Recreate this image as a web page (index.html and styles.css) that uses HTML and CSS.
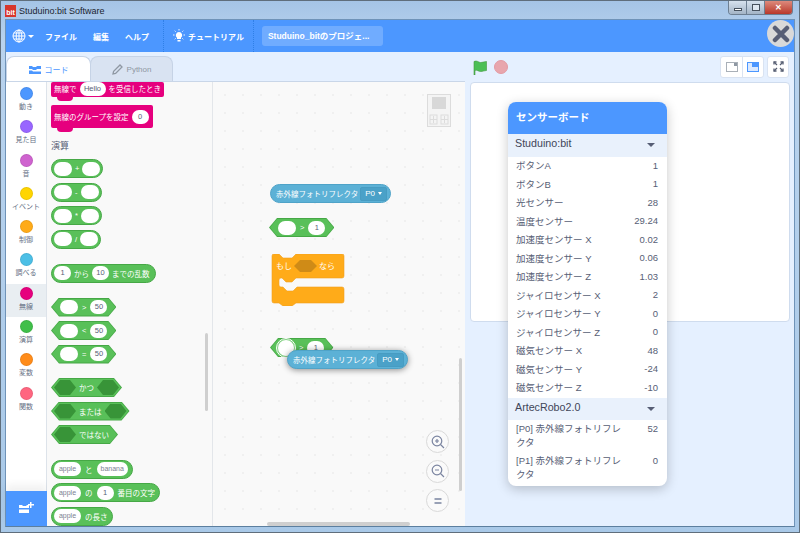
FILE: index.html
```html
<!DOCTYPE html>
<html lang="ja">
<head>
    <meta charset="UTF-8">
    <title>Studuino:bit Software</title>
    <link rel="stylesheet" href="styles.css">
</head>
<body>
<div class="window">
    <div class="titlebar">
        <span class="app-icon">bit</span>
        <span class="app-title">Studuino:bit Software</span>
        <div class="win-buttons">
            <span class="win-btn"><i class="win-min"></i></span>
            <span class="win-btn"><i class="win-max"></i></span>
            <span class="win-btn win-close">&#x2715;</span>
        </div>
    </div>

    <div class="app">
        <div class="menubar">
            <svg class="globe" width="14" height="14" viewBox="0 0 14 14" fill="none" stroke="#fff" stroke-width="1">
                <circle cx="7" cy="7" r="6"/>
                <ellipse cx="7" cy="7" rx="2.8" ry="6"/>
                <path d="M1 7h12M1.8 4h10.4M1.8 10h10.4M7 1v12"/>
            </svg>
            <span class="caret"></span>
            <span class="menu-item first">ファイル</span>
            <span class="menu-item">編集</span>
            <span class="menu-item">ヘルプ</span>
            <span class="menu-sep"></span>
            <svg class="bulb" width="14" height="14" viewBox="0 0 14 14" fill="#fff" stroke="#fff">
                <path d="M7 3a3.2 3.2 0 0 0-2 5.700V10h4V8.700A3.200 3.200 0 0 0 7 3z" stroke="none"/>
                <path d="M5.500 11h3v1.500h-3z" stroke="none"/>
                <path d="M7 0v1.500M1 6h1.500M11.500 6H13M2.700 1.700l1 1M11.300 1.700l-1 1M2.700 10.300l1-1M11.300 10.300l-1-1" stroke-width="0.9"/>
            </svg>
            <span class="menu-item tutorial">チュートリアル</span>
            <span class="menu-sep wide"></span>
            <span class="project-name">Studuino_bitのプロジェ...</span>
        </div>

        <div class="main">
            <div class="editor">
                <div class="tabs">
                    <div class="tab active">
                        <svg width="12" height="9" viewBox="0 0 12 9" fill="#4c97ff">
                            <path d="M0 1h3l1 1h3l1-1h4v3H8L7 5H4L3 4H0zM0 5.500h3l1 1h8V9H0z"/>
                        </svg>
                        コード
                    </div>
                    <div class="tab">
                        <svg width="11" height="11" viewBox="0 0 11 11" fill="none" stroke="#8f98a3" stroke-width="1.300">
                            <path d="M1 10l.6-2.600L8 1l2 2-6.400 6.400z"/>
                        </svg>
                        Python
                    </div>
                </div>
                <div class="editor-body">
                    <div class="categories">
                        <div class="cat"><span class="dot motion"></span>動き</div>
                        <div class="cat"><span class="dot looks"></span>見た目</div>
                        <div class="cat"><span class="dot sound"></span>音</div>
                        <div class="cat"><span class="dot event"></span>イベント</div>
                        <div class="cat"><span class="dot control"></span>制御</div>
                        <div class="cat"><span class="dot sensing"></span>調べる</div>
                        <div class="cat selected"><span class="dot radio"></span>無線</div>
                        <div class="cat"><span class="dot operator"></span>演算</div>
                        <div class="cat"><span class="dot variable"></span>変数</div>
                        <div class="cat"><span class="dot func"></span>関数</div>
                        <div class="ext-button">
                            <svg width="15" height="13" viewBox="0 0 15 13" fill="#fff">
                                <path d="M0 3h3l1 1h3l1-1h2v3H0zM0 7.500h10V11H0z"/>
                                <path d="M11 0h1.500v2H15v1.500h-2.500V6H11V3.500H9V2h2z"/>
                            </svg>
                        </div>
                    </div>

                    <div class="palette">
                        <div class="pink-block cut-top">無線で <span class="field wide">Hello</span> を受信したとき</div>
                        <div class="pink-block second">無線のグループを設定 <span class="field">0</span></div>
                        <div class="pal-title">演算</div>

                        <div class="pal-group ops">
                            <div class="pill"><span class="field blank"></span>+<span class="field blank"></span></div>
                            <div class="pill"><span class="field blank"></span>-<span class="field blank"></span></div>
                            <div class="pill"><span class="field blank"></span>*<span class="field blank"></span></div>
                            <div class="pill"><span class="field blank"></span>/<span class="field blank"></span></div>
                        </div>

                        <div class="pill random"><span class="field">1</span>から<span class="field">10</span>までの乱数</div>

                        <div class="pal-group compare">
                            <div class="hex"><span class="field blank"></span>&gt;<span class="field">50</span></div>
                            <div class="hex"><span class="field blank"></span>&lt;<span class="field">50</span></div>
                            <div class="hex"><span class="field blank"></span>=<span class="field">50</span></div>
                        </div>

                        <div class="pal-group logic">
                            <div class="hex"><span class="slot"></span>かつ<span class="slot"></span></div>
                            <div class="hex"><span class="slot"></span>または<span class="slot"></span></div>
                            <div class="hex"><span class="slot"></span>ではない</div>
                        </div>

                        <div class="pal-group strings">
                            <div class="pill"><span class="field text">apple</span>と<span class="field text">banana</span></div>
                            <div class="pill"><span class="field text">apple</span>の<span class="field">1</span>番目の文字</div>
                            <div class="pill"><span class="field text">apple</span>の長さ</div>
                        </div>
                        <div class="scroll-v pal-scroll"></div>
                    </div>

                    <div class="workspace">
                        <svg class="minimap" width="24" height="33" viewBox="0 0 24 33" fill="none" stroke="#dcdcdc">
                            <rect x="0.500" y="0.500" width="23" height="32" fill="#f4f4f4"/>
                            <rect x="5" y="3" width="14" height="12" fill="#d8d8d8" stroke="none"/>
                            <rect x="3" y="21" width="7" height="9"/>
                            <rect x="14" y="21" width="7" height="9"/>
                            <path d="M6.500 22v7M3 25.500h7M17.500 22v7M14 25.500h7"/>
                        </svg>

                        <div class="pill sense on-sheet b1">赤外線フォトリフレクタ<span class="dropdown">P0<i></i></span></div>
                        <div class="hex on-sheet b2"><span class="field blank"></span>&gt;<span class="field">1</span></div>

                        <svg class="on-sheet b3" width="74" height="52" viewBox="0 0 74 52">
                            <path d="M3 0h5l4 4h9l4-4h46a2 2 0 0 1 2 2v20a2 2 0 0 1-2 2H25l-4 4h-6l-4-4h-1a2 2 0 0 0-2 2v5a2 2 0 0 0 2 2h2l4 4h6l4-4h45a2 2 0 0 1 2 2v12a2 2 0 0 1-2 2H25l-4 3h-9l-4-3H3a2 2 0 0 1-2-2V2a2 2 0 0 1 2-2z" fill="#ffab19" stroke="#f0a020" stroke-width="0.600"/>
                            <path d="M23 12l6-6h11l6 6-6 6H29z" fill="#cf8b17"/>
                            <text x="5" y="15" class="if-text">もし</text>
                            <text x="48" y="15" class="if-text">なら</text>
                        </svg>

                        <div class="hex on-sheet b4"><span class="field blank ring"></span>&gt;<span class="field">1</span></div>
                        <div class="pill sense on-sheet b5">赤外線フォトリフレクタ<span class="dropdown">P0<i></i></span></div>

                        <div class="zoom-buttons">
                            <span class="zoom-btn">
                                <svg width="14" height="14" viewBox="0 0 14 14" fill="none" stroke="#7a84a0" stroke-width="1.200">
                                    <circle cx="6" cy="6" r="4.800"/><path d="M9.500 9.500L13 13M4 6h4M6 4v4"/>
                                </svg>
                            </span>
                            <span class="zoom-btn">
                                <svg width="14" height="14" viewBox="0 0 14 14" fill="none" stroke="#7a84a0" stroke-width="1.200">
                                    <circle cx="6" cy="6" r="4.800"/><path d="M9.500 9.500L13 13M4 6h4"/>
                                </svg>
                            </span>
                            <span class="zoom-btn">
                                <svg width="14" height="14" viewBox="0 0 14 14" fill="none" stroke="#7a84a0" stroke-width="1.600">
                                    <path d="M3.500 5h7M3.500 9h7"/>
                                </svg>
                            </span>
                        </div>
                        <div class="scroll-v work-scroll"></div>
                        <div class="scroll-h"></div>
                    </div>
                </div>
            </div>

            <div class="stage-side">
                <div class="stage-header">
                    <svg width="15" height="15" viewBox="0 0 15 15">
                        <path d="M1 1.500c3-1.500 4.500 1 6.500 1s3.500-.8 6-1v9c-2.500.3-4 1-6 1s-3.500-2-5.500-1V15H1z" fill="#4cbf56" stroke="#45993d" stroke-width="0.600"/>
                    </svg>
                    <span class="stop"></span>
                    <div class="stage-tools">
                        <span class="tool-group">
                            <span class="tool">
                                <svg width="12" height="10" viewBox="0 0 12 10">
                                    <rect x="0.500" y="0.500" width="11" height="9" fill="#fff" stroke="#a9b0b8"/>
                                    <rect x="8" y="1" width="3" height="3" fill="#8f98a3"/>
                                </svg>
                            </span>
                            <span class="tool">
                                <svg width="12" height="10" viewBox="0 0 12 10">
                                    <rect x="0.500" y="0.500" width="11" height="9" fill="#dbe9ff" stroke="#4c97ff"/>
                                    <rect x="5" y="1" width="6" height="4" fill="#4c97ff"/>
                                </svg>
                            </span>
                        </span>
                        <span class="tool single">
                            <svg width="11" height="11" viewBox="0 0 11 11" fill="none" stroke="#565e72" stroke-width="1.300">
                                <path d="M1 1l3 3M10 1L7 4M1 10l3-3M10 10L7 7"/>
                                <path d="M1 3.500V1h2.500M7.500 1H10v2.500M1 7.500V10h2.500M10 7.500V10H7.500"/>
                            </svg>
                        </span>
                    </div>
                </div>
                <div class="stage"></div>
            </div>
        </div>

        <div class="close-app">
            <svg width="18" height="18" viewBox="0 0 18 18" stroke="#575e75" stroke-width="4.500" stroke-linecap="round">
                <path d="M3 3l12 12M15 3L3 15"/>
            </svg>
        </div>

        <div class="sensor-board">
            <div class="sb-header">センサーボード</div>
            <div class="sb-section">Studuino:bit<i></i></div>
            <div class="sb-list">
                <div class="sb-row"><span>ボタンA</span><span>1</span></div>
                <div class="sb-row"><span>ボタンB</span><span>1</span></div>
                <div class="sb-row"><span>光センサー</span><span>28</span></div>
                <div class="sb-row"><span>温度センサー</span><span>29.24</span></div>
                <div class="sb-row"><span>加速度センサー X</span><span>0.02</span></div>
                <div class="sb-row"><span>加速度センサー Y</span><span>0.06</span></div>
                <div class="sb-row"><span>加速度センサー Z</span><span>1.03</span></div>
                <div class="sb-row"><span>ジャイロセンサー X</span><span>2</span></div>
                <div class="sb-row"><span>ジャイロセンサー Y</span><span>0</span></div>
                <div class="sb-row"><span>ジャイロセンサー Z</span><span>0</span></div>
                <div class="sb-row"><span>磁気センサー X</span><span>48</span></div>
                <div class="sb-row"><span>磁気センサー Y</span><span>-24</span></div>
                <div class="sb-row"><span>磁気センサー Z</span><span>-10</span></div>
            </div>
            <div class="sb-section second-section">ArtecRobo2.0<i></i></div>
            <div class="sb-list last">
                <div class="sb-row tall"><span>[P0] 赤外線フォトリフレクタ</span><span>52</span></div>
                <div class="sb-row tall"><span>[P1] 赤外線フォトリフレクタ</span><span>0</span></div>
            </div>
        </div>
    </div>
</div>
</body>
</html>
```

FILE: styles.css
```css
* {
    box-sizing: border-box;
}
body {
    margin: 0;
    width: 800px;
    height: 533px;
    overflow: hidden;
    font-family: "Liberation Sans", "Noto Sans CJK JP", sans-serif;
}
.window {
    height: 533px;
    padding: 0 4px 5px;
    background: linear-gradient(#a5c4e6, #b9d3ee 40px, #a9c9e8);
    border: 1px solid #5f6e7c;
    display: flex;
    flex-direction: column;
}
.titlebar {
    height: 18px;
    display: flex;
    align-items: center;
    margin: 0 -1px;
    padding-left: 1px;
    flex-shrink: 0;
}
.app-icon {
    width: 11px;
    height: 12px;
    background: #d7372c;
    color: #fff;
    font-size: 7px;
    font-weight: bold;
    line-height: 15px;
    text-align: center;
    margin: 1px 3px 0 0;
}
.app-title {
    font-size: 9px;
    color: #1c2430;
    margin-top: 2px;
}
.win-buttons {
    margin-left: auto;
    margin-top: -5px;
    margin-right: 3px;
    display: flex;
    height: 14px;
    border: 1px solid #6d7f92;
    border-top: 0;
    border-radius: 0 0 4px 4px;
    overflow: hidden;
}
.win-btn {
    width: 18px;
    background: linear-gradient(#d6e2ee, #a3b4c6);
    border-right: 1px solid #6d7f92;
    display: flex;
    align-items: center;
    justify-content: center;
}
.win-close {
    width: 27px;
    border-right: 0;
    background: linear-gradient(#dd8a7c, #b9382a);
    color: #fff;
    font-size: 8px;
    font-weight: bold;
}
.win-min {
    width: 8px;
    height: 3px;
    margin-top: 4px;
    background: #fff;
    border: 1px solid #47525e;
}
.win-max {
    width: 8px;
    height: 7px;
    background: #dfe8f1;
    border: 1px solid #47525e;
}

.app {
    position: relative;
    flex: 1;
    min-height: 0;
    display: flex;
    flex-direction: column;
    background: #e5f0ff;
    border: 1px solid #6f93b8;
    border-bottom-color: #5c7f9f;
}
.menubar {
    height: 32px;
    flex-shrink: 0;
    background: #4c97ff;
    color: #fff;
    display: flex;
    align-items: center;
    padding-left: 6px;
    font-size: 8px;
    font-weight: bold;
}
.caret {
    width: 0;
    height: 0;
    margin-left: 2px;
    border: 3px solid transparent;
    border-top: 3.500px solid #fff;
    border-bottom: 0;
}
.menu-item {
    margin-left: 16px;
}
.menu-item.first {
    margin-left: 11px;
}
.menu-sep {
    height: 32px;
    margin-left: 14px;
    border-left: 1px dotted #2f7fe6;
}
.menu-sep.wide {
    margin-left: 9px;
}
.bulb {
    margin-left: 8px;
}
.menu-item.tutorial {
    margin-left: 2px;
}
.project-name {
    width: 121px;
    height: 20px;
    margin-left: 8px;
    padding-left: 6px;
    line-height: 20px;
    background: #70acff;
    border-radius: 3px;
    white-space: nowrap;
    font-size: 8.500px;
}

.main {
    flex: 1;
    min-height: 0;
    display: flex;
}
.editor {
    width: 459px;
    flex-shrink: 0;
    display: flex;
    flex-direction: column;
}
.tabs {
    height: 29px;
    flex-shrink: 0;
    display: flex;
    align-items: flex-end;
    padding-left: 1px;
}
.tab {
    width: 83px;
    height: 25px;
    display: flex;
    align-items: center;
    justify-content: center;
    gap: 4px;
    margin-left: -1px;
    background: #d9e3f2;
    border: 1px solid #c6d3e6;
    border-bottom: 0;
    border-radius: 8px 8px 0 0;
    color: #8f98a3;
    font-size: 8px;
}
.tab.active {
    width: 85px;
    position: relative;
    z-index: 1;
    background: #fff;
    color: #4c97ff;
}
.editor-body {
    flex: 1;
    min-height: 0;
    display: flex;
    border-top: 1px solid #c9d6e8;
}
.categories {
    position: relative;
    width: 41px;
    flex-shrink: 0;
    background: #fff;
    border-right: 1px solid #dde3ea;
    padding-top: 2px;
}
.cat {
    height: 33.300px;
    display: flex;
    flex-direction: column;
    align-items: center;
    padding-top: 3px;
    font-size: 7px;
    line-height: 10px;
    color: #667085;
}
.cat.selected {
    background: #e9eef2;
}
.dot {
    width: 13px;
    height: 13px;
    border-radius: 50%;
    margin-bottom: 2px;
    border: 1px solid rgba(0, 0, 0, 0.08);
}
.motion { background: #4c97ff; }
.looks { background: #9966ff; }
.sound { background: #cf63cf; }
.event { background: #ffd500; }
.control { background: #ffab19; }
.sensing { background: #4cbfe6; }
.radio { background: #e6007e; }
.operator { background: #40bf4a; }
.variable { background: #ff8c1a; }
.func { background: #ff6680; }
.ext-button {
    position: absolute;
    left: 0;
    right: -1px;
    bottom: 0;
    height: 35px;
    background: #4c97ff;
    display: flex;
    align-items: center;
    justify-content: center;
    box-shadow: 0 -6px 8px rgba(0, 0, 0, 0.06);
}

.palette {
    position: relative;
    width: 166px;
    flex-shrink: 0;
    overflow: hidden;
    padding-left: 4px;
    background: #f9f9f9;
    border-right: 1px solid #e3e6ea;
    font-size: 7.500px;
    color: #fff;
}
.pink-block {
    position: relative;
    display: flex;
    align-items: center;
    gap: 3px;
    padding: 0 3px;
    background: #e6007e;
    border-radius: 2px;
    white-space: nowrap;
}
.pink-block::after {
    content: "";
    position: absolute;
    left: 6px;
    bottom: -4px;
    width: 16px;
    height: 4px;
    background: #e6007e;
    border-radius: 0 0 5px 5px;
}
.cut-top {
    width: 113px;
    height: 15px;
    padding-bottom: 2px;
}
.second {
    width: 102px;
    height: 23px;
    margin-top: 8px;
}
.pal-title {
    margin-top: 11px;
    height: 14px;
    line-height: 14px;
    font-size: 9px;
    color: #575e75;
}
.pal-group {
    display: flex;
    flex-direction: column;
    align-items: flex-start;
    gap: 4.500px;
}
.ops {
    margin-top: 6px;
}
.pill {
    height: 19px;
    width: max-content;
    display: flex;
    align-items: center;
    gap: 3px;
    padding: 0 2px;
    background: #59c059;
    border: 1px solid #46a846;
    border-radius: 10px;
    white-space: nowrap;
}
.random {
    margin-top: 15px;
    padding: 0 5px 0 2px;
}
.compare {
    margin-top: 15px;
}
.logic {
    margin-top: 14.500px;
}
.strings {
    margin-top: 15.500px;
}
.strings .pill {
    gap: 4px;
    padding: 0 4px 0 2px;
}
.field {
    flex-shrink: 0;
    min-width: 17px;
    height: 14px;
    padding: 0 4px;
    border-radius: 7px;
    background: #fff;
    color: #575e75;
    font-size: 7.500px;
    line-height: 14px;
    text-align: center;
    font-weight: normal;
}
.field.blank {
    width: 18px;
    padding: 0;
}
.field.wide {
    width: 26px;
}
.field.text {
    color: #7b8192;
    min-width: 27px;
    padding: 0 4px;
    font-size: 7px;
}
.hex {
    position: relative;
    isolation: isolate;
    height: 19px;
    width: max-content;
    display: flex;
    align-items: center;
    gap: 4px;
    padding: 0 9px;
    background: #46a846;
    clip-path: polygon(8px 0, calc(100% - 8px) 0, 100% 50%, calc(100% - 8px) 100%, 8px 100%, 0 50%);
    white-space: nowrap;
}
.hex::before {
    content: "";
    position: absolute;
    inset: 1px;
    z-index: -1;
    background: #59c059;
    clip-path: polygon(7px 0, calc(100% - 7px) 0, 100% 50%, calc(100% - 7px) 100%, 7px 100%, 0 50%);
}
.logic .hex {
    padding: 0 3px;
    gap: 3px;
}
.logic .hex:last-child {
    padding-right: 9px;
}
.slot {
    width: 22px;
    height: 15px;
    background: #389438;
    clip-path: polygon(6px 0, calc(100% - 6px) 0, 100% 50%, calc(100% - 6px) 100%, 6px 100%, 0 50%);
}
.scroll-v {
    position: absolute;
    width: 3px;
    background: #cfcfcf;
    border-radius: 2px;
}
.pal-scroll {
    right: 4px;
    top: 251px;
    height: 78px;
}

.workspace {
    position: relative;
    flex: 1;
    min-width: 0;
    overflow: hidden;
    background-color: #f9f9f9;
    background-image: radial-gradient(#dcdcdc 0.500px, transparent 0.800px);
    background-size: 18px 18px;
    background-position: 3px 4px;
    color: #fff;
    font-size: 7.500px;
}
.minimap {
    position: absolute;
    left: 214px;
    top: 12px;
}
.on-sheet {
    position: absolute;
}
.sense {
    background: #5cb1d6;
    border-color: #4fa3c8;
    padding: 0 3px 0 5px;
    width: 121px;
    justify-content: space-between;
    gap: 0;
}
.dropdown {
    display: flex;
    align-items: center;
    gap: 3px;
    height: 14px;
    padding: 0 4px;
    background: #4aa1c8;
    border: 1px solid #479cc2;
    border-radius: 2px;
    font-size: 8px;
}
.dropdown i {
    width: 0;
    height: 0;
    border: 2.500px solid transparent;
    border-top: 3px solid #fff;
    border-bottom: 0;
}
.b1 {
    left: 57px;
    top: 102px;
}
.b2 {
    left: 56px;
    top: 136px;
}
.b3 {
    left: 58px;
    top: 172px;
}
.if-text {
    fill: #fff;
    font-size: 8px;
}
.b4 {
    left: 57px;
    top: 256px;
}
.ring {
    width: 18px;
    height: 18px;
    margin-left: -2px;
    border-radius: 50%;
    border: 1px solid #7fcf7f;
    outline: 1px solid #fff;
}
.b5 {
    left: 74px;
    top: 268px;
    box-shadow: 0 1px 6px rgba(0, 0, 0, 0.45);
}
.zoom-buttons {
    position: absolute;
    left: 213px;
    top: 348px;
    display: flex;
    flex-direction: column;
    gap: 6.500px;
}
.zoom-btn {
    width: 23px;
    height: 23px;
    display: flex;
    align-items: center;
    justify-content: center;
    background: #fafafa;
    border: 1px solid #d9d9d9;
    border-radius: 50%;
}
.work-scroll {
    right: 3px;
    top: 276px;
    height: 133px;
}
.scroll-h {
    position: absolute;
    left: 54px;
    bottom: 0;
    width: 143px;
    height: 4px;
    background: #cfcfcf;
    border-radius: 2px;
}

.stage-side {
    flex: 1;
    min-width: 0;
    padding-right: 4px;
    padding-left: 5px;
}
.stage-header {
    height: 30px;
    display: flex;
    align-items: center;
    gap: 6px;
    padding-left: 3px;
}
.stop {
    width: 14px;
    height: 14px;
    border-radius: 50%;
    background: #e8a6ad;
    border: 1px solid #e39aa3;
}
.stage-tools {
    margin-left: auto;
    margin-right: 1px;
    margin-top: -1px;
    display: flex;
    gap: 3px;
}
.tool-group {
    display: flex;
    background: #fff;
    border: 1px solid #d9e3f2;
    border-radius: 3px;
}
.tool {
    width: 21px;
    height: 20px;
    display: flex;
    align-items: center;
    justify-content: center;
}
.tool + .tool {
    border-left: 1px solid #d9e3f2;
}
.tool.single {
    width: 22px;
    height: 22px;
    background: #fff;
    border: 1px solid #d9e3f2;
    border-radius: 3px;
}
.stage {
    height: 240px;
    background: #fff;
    border: 1px solid #cfdcee;
    border-radius: 4px;
}

.close-app {
    position: absolute;
    right: 0;
    top: 0;
    width: 27px;
    height: 27px;
    display: flex;
    align-items: center;
    justify-content: center;
    background: #d9d9d9;
    border-radius: 50%;
}

.sensor-board {
    position: absolute;
    left: 502px;
    top: 82px;
    width: 159px;
    background: #fff;
    border-radius: 8px;
    box-shadow: 0 3px 12px rgba(0, 0, 0, 0.22);
    font-size: 9.500px;
    color: #575e75;
    overflow: hidden;
}
.sb-header {
    height: 32px;
    padding-left: 8px;
    line-height: 30px;
    background: #4c97ff;
    color: #fff;
    font-size: 10.500px;
    font-weight: bold;
}
.sb-section {
    position: relative;
    height: 23px;
    padding-left: 7px;
    line-height: 19px;
    background: #e9f1fc;
    font-size: 10.700px;
    color: #3f4558;
}
.sb-section.second-section {
    height: 22px;
}
.sb-section i {
    position: absolute;
    right: 12px;
    top: 9px;
    width: 0;
    height: 0;
    border: 4px solid transparent;
    border-top: 4px solid #575e75;
    border-bottom: 0;
}
.sb-list {
    padding: 0 9px 0 8px;
    color: #575e75;
}
.sb-row {
    height: 18.500px;
    padding-bottom: 2px;
    display: flex;
    justify-content: space-between;
    align-items: center;
}
.sb-list.last {
    padding-top: 2px;
}
.sb-row.tall {
    height: 32px;
    padding-bottom: 0;
    align-items: flex-start;
    line-height: 14px;
}
.sb-row.tall span:first-child {
    width: 110px;
}
```
